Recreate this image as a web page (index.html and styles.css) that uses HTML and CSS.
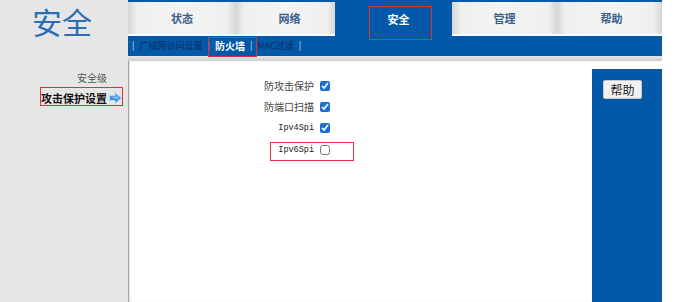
FILE: index.html
```html
<!DOCTYPE html>
<html>
<head>
  <meta charset="utf-8">
  <link rel="stylesheet" href="styles.css">
</head>
<body>
  <div class="page">
    <div class="side">
      <div class="logo">安全</div>
      <div class="menu">
        <div class="menu-item">安全级</div>
        <div class="menu-item current">
          <span class="mark side-mark"></span>
          攻击保护设置
          <svg class="arrow" width="13" height="12" viewBox="0 0 13 12">
            <path d="M0.5 3.5 H6 V0.5 L12.5 6 L6 11.5 V8.5 H0.5 Z" fill="#3d8fe0" stroke="#bcd8f4" stroke-width="1"/>
            <path d="M1.5 4.5 H7 V2.6 L10.8 6 L7 7.5 Z" fill="#7bb6ee"/>
          </svg>
        </div>
      </div>
    </div>

    <div class="main">
      <div class="nav">
        <div class="tabs">
          <div class="tab t1">状态</div>
          <div class="tab t2">网络</div>
          <div class="tab t3 active"><span class="mark tab-mark"></span>安全</div>
          <div class="tab t4">管理</div>
          <div class="tab t5">帮助</div>
        </div>
        <div class="subnav">
          <span class="sep">|</span>
          <span>广域网访问设置</span>
          <span class="sep">|</span>
          <span class="sub-active"><span class="mark sub-mark"></span>防火墙</span>
          <span class="sep">|</span>
          <span>MAC过滤</span>
          <span class="sep">|</span>
        </div>
      </div>
      <div class="navline"></div>

      <div class="body">
        <div class="content">
          <div class="row">
            <span class="lbl">防攻击保护</span>
            <input type="checkbox" checked>
          </div>
          <div class="row">
            <span class="lbl">防端口扫描</span>
            <input type="checkbox" checked>
          </div>
          <div class="row">
            <span class="lbl mono">Ipv4Spi</span>
            <input type="checkbox" checked>
          </div>
          <div class="row marked">
            <span class="mark row-mark"></span>
            <span class="lbl mono">Ipv6Spi</span>
            <input type="checkbox">
          </div>
        </div>
        <div class="helpcol">
          <button class="help-btn">帮助</button>
        </div>
      </div>
    </div>
  </div>
</body>
</html>
```

FILE: styles.css
```css
/* router admin page - security / firewall */
body {
  margin: 0;
  background-color: #ffffff;
  font-family: "Noto Sans CJK SC", "Liberation Sans", sans-serif;
  width: 684px;
  height: 302px;
  overflow: hidden;
}

.page {
  display: flex;
  height: 302px;
}

.side {
  width: 128px;
  background-color: #e6e6e6;
}

.logo {
  height: 56px;
  line-height: 42px;
  font-size: 30px;
  color: #2a6db5;
  text-align: center;
  padding-right: 4px;
}

.menu {
  padding-top: 12px;
}

.menu-item {
  font-size: 10px;
  color: #555;
  text-align: right;
  padding-right: 21px;
  height: 20px;
  line-height: 20px;
}

.menu-item.current {
  position: relative;
  font-size: 11px;
  font-weight: bold;
  color: #111;
  padding-right: 6px;
  display: flex;
  justify-content: flex-end;
  align-items: center;
  gap: 2px;
}

.main {
  width: 534px;
  display: flex;
  flex-direction: column;
}

.nav {
  background-color: #0358a8;
  height: 56px;
}

.tabs {
  display: flex;
  margin-top: 2px;
  height: 34px;
}

.tab {
  position: relative;
  font-size: 11px;
  font-weight: bold;
  color: #3a5f8c;
  display: flex;
  justify-content: center;
  align-items: center;
  background: linear-gradient(to right, #d6d6d6 0%, #efefef 8%, #f4f4f4 50%, #efefef 92%, #d6d6d6 100%);
  border-bottom: 2px solid #fafafa;
  box-sizing: border-box;
}

.t1 { width: 108px; }
.t2 { width: 99px; padding-left: 8px; }
.t3 { width: 117px; padding-left: 10px; }
.t4 { width: 105px; }
.t5 { width: 105px; padding-left: 4px; }

.tab.active {
  background: transparent;
  border-bottom: none;
  color: #ffffff;
}

.subnav {
  height: 20px;
  display: flex;
  align-items: center;
  gap: 5px;
  padding-left: 4px;
  font-size: 9px;
  color: #0b2f5c;
}

.subnav span {
  display: inline-block;
  line-height: 20px;
}

.subnav .sep {
  color: #c8d8ee;
}

.sub-active {
  position: relative;
  color: #ffffff;
  font-weight: bold;
  font-size: 10px;
}

.navline {
  height: 5px;
  background: linear-gradient(#e6e6e6, #cfcfcf);
}

.body {
  flex: 1;
  display: flex;
}

.content {
  flex: 1;
  background-color: #ffffff;
  box-shadow: inset 2px 0 2px -1px #8a8a8a;
  padding-top: 14px;
}

.row {
  display: flex;
  align-items: center;
  height: 21px;
}

.row.marked {
  position: relative;
  margin-top: 1px;
}

.lbl {
  width: 186px;
  text-align: right;
  font-size: 10px;
  color: #444;
  margin-right: 6px;
}

.lbl.mono {
  font-family: "Liberation Mono", monospace;
  font-size: 8.5px;
  color: #222;
}

.row input {
  width: 10px;
  height: 10px;
  margin: 0;
  accent-color: #1c6fd4;
}

.helpcol {
  width: 70px;
  margin-top: 8px;
  background-color: #0358a8;
}

.help-btn {
  margin: 11px 0 0 11px;
  width: 39px;
  height: 19px;
  padding: 0;
  font-family: "Noto Sans CJK SC", sans-serif;
  font-size: 12px;
  color: #222;
  background-color: #f2f2f2;
  border: 1px solid #c8c8c8;
  border-radius: 2px;
}

/* red annotation boxes */
.mark {
  position: absolute;
  border: 1.5px solid #d8333f;
  box-sizing: border-box;
}

.tab-mark {
  left: 34px;
  top: 4px;
  width: 63px;
  height: 34px;
}

.sub-mark {
  left: -7px;
  top: 1px;
  width: 49px;
  height: 20px;
}

.side-mark {
  left: 40px;
  top: -1px;
  width: 83px;
  height: 19px;
}

.row-mark {
  left: 142px;
  top: 3px;
  width: 84px;
  height: 19px;
}
```
